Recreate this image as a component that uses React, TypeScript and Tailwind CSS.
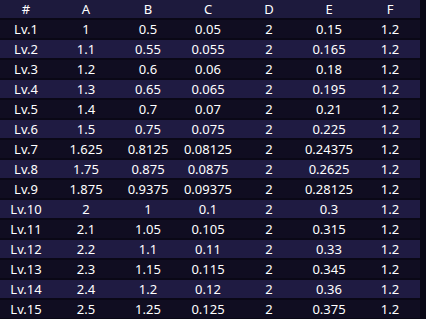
import React from "react";

const rows: string[][] = [
  ["Lv.1", "1", "0.5", "0.05", "2", "0.15", "1.2"],
  ["Lv.2", "1.1", "0.55", "0.055", "2", "0.165", "1.2"],
  ["Lv.3", "1.2", "0.6", "0.06", "2", "0.18", "1.2"],
  ["Lv.4", "1.3", "0.65", "0.065", "2", "0.195", "1.2"],
  ["Lv.5", "1.4", "0.7", "0.07", "2", "0.21", "1.2"],
  ["Lv.6", "1.5", "0.75", "0.075", "2", "0.225", "1.2"],
  ["Lv.7", "1.625", "0.8125", "0.08125", "2", "0.24375", "1.2"],
  ["Lv.8", "1.75", "0.875", "0.0875", "2", "0.2625", "1.2"],
  ["Lv.9", "1.875", "0.9375", "0.09375", "2", "0.28125", "1.2"],
  ["Lv.10", "2", "1", "0.1", "2", "0.3", "1.2"],
  ["Lv.11", "2.1", "1.05", "0.105", "2", "0.315", "1.2"],
  ["Lv.12", "2.2", "1.1", "0.11", "2", "0.33", "1.2"],
  ["Lv.13", "2.3", "1.15", "0.115", "2", "0.345", "1.2"],
  ["Lv.14", "2.4", "1.2", "0.12", "2", "0.36", "1.2"],
  ["Lv.15", "2.5", "1.25", "0.125", "2", "0.375", "1.2"],
];

const header = ["#", "A", "B", "C", "D", "E", "F"];

function Row({ cells, bg }: { cells: string[]; bg: string }) {
  return (
    <div
      className={`grid grid-cols-[52px_68px_56px_64px_58px_62px_60px] h-[18px] items-center ${bg}`}
    >
      {cells.map((c, i) => (
        <div key={i} className="text-center leading-[18px]">
          {c}
        </div>
      ))}
    </div>
  );
}

export default function App() {
  return (
    <div
      className="w-[426px] h-[319px] overflow-hidden bg-[#0a0816] text-white text-[13px]"
      style={{ fontFamily: '"Noto Sans", sans-serif' }}
    >
      <div className="w-[420px] flex flex-col gap-[2px]">
        <Row cells={header} bg="bg-[#1d1a3d]" />
        {rows.map((r, i) => (
          <Row key={i} cells={r} bg={i % 2 === 0 ? "bg-[#100d21]" : "bg-[#1f1b42]"} />
        ))}
      </div>
    </div>
  );
}
